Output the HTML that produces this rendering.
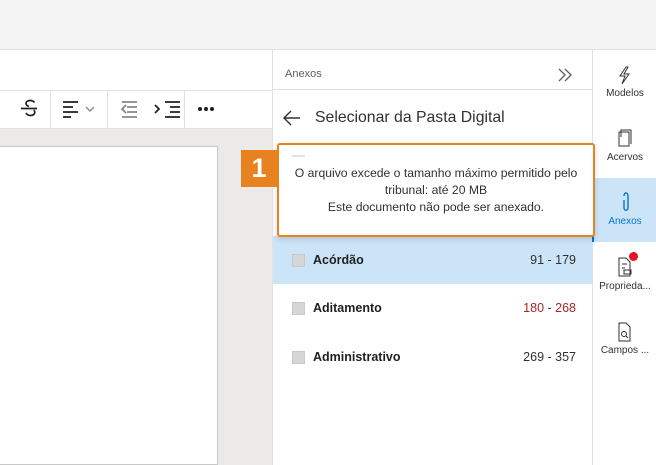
<!DOCTYPE html>
<html><head><meta charset="utf-8"><style>
*{margin:0;padding:0;box-sizing:border-box}
body{width:656px;height:465px;overflow:hidden;position:relative;font-family:"Liberation Sans",sans-serif;background:#fff;color:#323130}
.a{position:absolute}
.sb{font-size:10px;text-align:center;width:64px;color:#323130}
.row{position:absolute;left:273px;width:319px;height:48px;font-size:12.5px}
.row .cb{position:absolute;left:19px;top:18px;width:13px;height:13px;background:#d6d6d6;border:1px solid #c8c8c8}
.row .t{position:absolute;left:40px;top:17px;font-weight:bold;color:#201f1e}
.row .r{position:absolute;right:16px;top:17px;color:#323130}
</style></head><body>
<div class="a" style="left:0;top:0;width:656px;height:50px;background:#f3f3f3;border-bottom:1px solid #e1e1e1"></div>
<div class="a" style="left:0;top:90px;width:273px;height:39px;border-top:1px solid #e1e1e1;border-bottom:1px solid #e1e1e1"></div>
<div class="a" style="left:0;top:129px;width:273px;height:336px;background:#ebeae9"></div>
<div class="a" style="left:0;top:146px;width:218px;height:319px;background:#fff;border:1px solid #c8c8c8;border-left:none"></div>
<div class="a" style="left:50px;top:90px;width:1px;height:39px;background:#e1e1e1"></div>
<div class="a" style="left:107px;top:90px;width:1px;height:39px;background:#e1e1e1"></div>
<div class="a" style="left:184px;top:90px;width:1px;height:39px;background:#e1e1e1"></div>
<svg class="a" style="left:0;top:90px" width="273" height="39">
<g stroke="#201f1e" stroke-width="1.7" fill="none">
<path d="M34.5 12.5c-1-1.5-2.5-2-4.5-2-2.5 0-4 1.3-4 3 0 1.5 1 2.3 3 3M26 23c1 1.7 2.5 2.5 4.5 2.5 2.6 0 4.3-1.4 4.3-3.2 0-1-.4-1.7-1.1-2.3"/><path d="M21 18.5h16"/>
<path d="M63 12h15M63 17h10M63 22h15M63 27h8"/>
<path d="M165 12h15M170 17h10M170 22h10M165 27h15M155 15l4 4-4 4"/>
</g>
<path d="M86 17l4 4 4-4" stroke="#8a8886" stroke-width="1.3" fill="none"/>
<g stroke="#8a8886" stroke-width="1.8" fill="none"><path d="M122 12h15M127 17h10M127 22h10M122 27h15M126 15l-4 4 4 4"/></g>
<g fill="#201f1e"><circle cx="200" cy="19" r="2"/><circle cx="206" cy="19" r="2"/><circle cx="212" cy="19" r="2"/></g>
</svg>
<div class="a" style="left:272px;top:50px;width:1px;height:415px;background:#e1e1e1"></div>
<div class="a" style="left:285px;top:68px;font-size:11px;color:#605e5c">Anexos</div>
<svg class="a" style="left:555px;top:66px" width="20" height="18"><path d="M4 3l6 6-6 6M10 3l6 6-6 6" stroke="#605e5c" stroke-width="1.3" fill="none"/></svg>
<div class="a" style="left:273px;top:89px;width:319px;height:1px;background:#e1e1e1"></div>
<svg class="a" style="left:282px;top:108px" width="20" height="20"><path d="M18 10H3M9 3l-7 7 7 7" stroke="#323130" stroke-width="1.4" fill="none"/></svg>
<div class="a" style="left:315px;top:109px;font-size:15.8px;color:#323130">Selecionar da Pasta Digital</div>
<div class="row" style="top:236px;background:#cce4f7"><div class="cb"></div><div class="t">Acórdão</div><div class="r">91 - 179</div></div>
<div class="row" style="top:284px"><div class="cb"></div><div class="t">Aditamento</div><div class="r" style="color:#a4262c">180 - 268</div></div>
<div class="row" style="top:333px"><div class="cb"></div><div class="t">Administrativo</div><div class="r">269 - 357</div></div>
<div class="a" style="left:592px;top:50px;width:1px;height:415px;background:#e1e1e1"></div>
<div class="a" style="left:593px;top:178px;width:63px;height:64px;background:#cce4f7"></div>
<div class="a" style="left:592px;top:178px;width:2px;height:64px;background:#0078d4"></div>
<svg class="a" style="left:593px;top:50px" width="63" height="300" fill="none" stroke="#323130" stroke-width="1">
<path d="M33 17l-6 9h5l-3 8 7-10h-5l4-7z"/>
<path d="M28 87v-7h10v14M26 82h10v14H26z"/>
<path d="M31 146c0-4 4-4 4 0v12c0 3-4 3-4 0v-8" stroke="#0078d4" stroke-width="1.4"/>
<path d="M26 208h7l4 4v14H26z M29 214h5M29 218h3M31 220h7v4h-7z"/>
<path d="M26 273h7l4 4v14H26z"/><circle cx="31" cy="284" r="2.5"/><path d="M33 286l2 2"/>
</svg>
<div class="a" style="left:629px;top:252px;width:9px;height:9px;border-radius:50%;background:#e81123"></div>
<div class="a sb" style="left:593px;top:88px">Modelos</div>
<div class="a sb" style="left:593px;top:152px">Acervos</div>
<div class="a sb" style="left:593px;top:216px;color:#0078d4">Anexos</div>
<div class="a sb" style="left:593px;top:281px">Proprieda...</div>
<div class="a sb" style="left:593px;top:345px">Campos ...</div>
<div class="a" style="left:277px;top:143px;width:318px;height:94px;border:2px solid #e8821e;border-radius:3px;background:#fff;box-shadow:0 2px 6px rgba(0,0,0,.15)"></div>
<div class="a" style="left:292px;top:155px;width:13px;height:2px;background:#e1e1e1"></div>
<div class="a" style="left:279px;top:165px;width:314px;text-align:center;font-size:12.2px;line-height:17px;color:#323130">O arquivo excede o tamanho máximo permitido pelo<br>tribunal: até 20 MB<br>Este documento não pode ser anexado.</div>
<div class="a" style="left:241px;top:150px;width:36px;height:37px;background:#e8821e;color:#fff;font-weight:bold;font-size:27px;text-align:center;line-height:37px">1</div>
</body></html>
